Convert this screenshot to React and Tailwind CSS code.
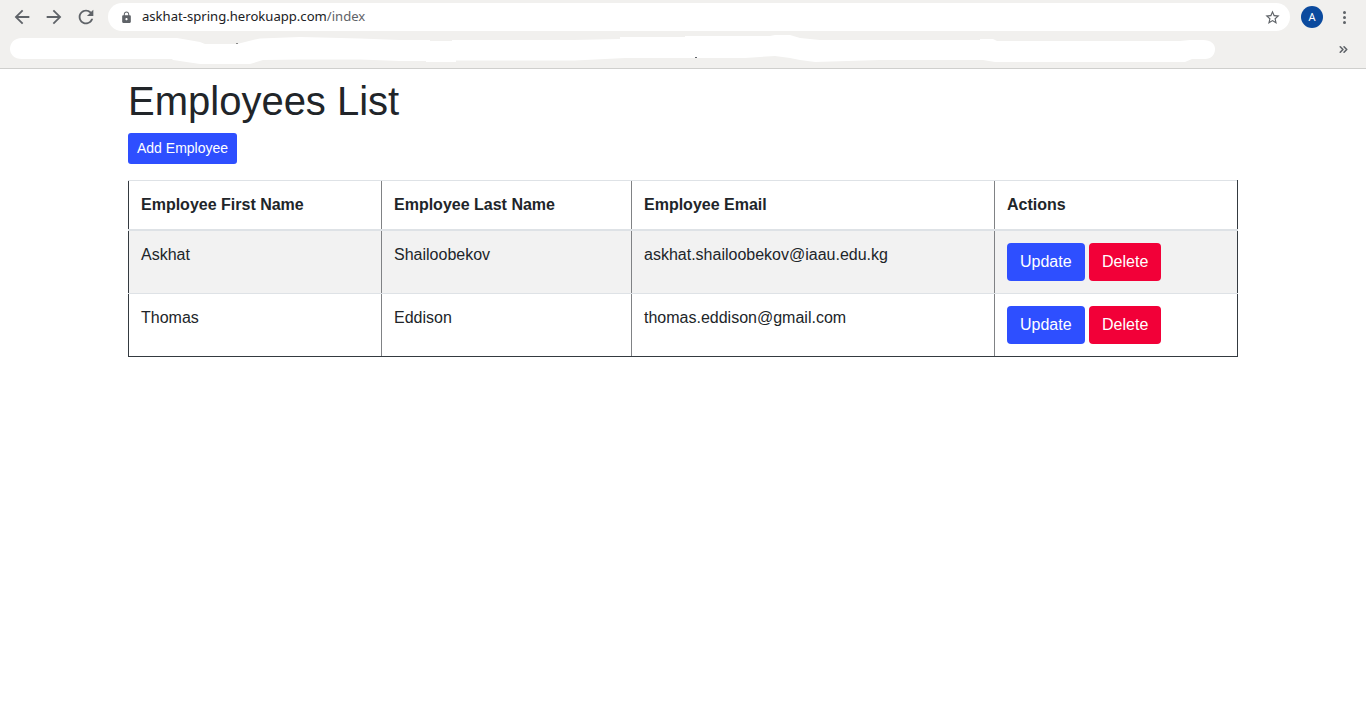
import { MdArrowBack, MdArrowForward, MdRefresh, MdLock, MdStarBorder } from "react-icons/md";
import { ChevronsRight } from "lucide-react";

const EMPLOYEES = [
  { first: "Askhat", last: "Shailoobekov", email: "askhat.shailoobekov@iaau.edu.kg" },
  { first: "Thomas", last: "Eddison", email: "thomas.eddison@gmail.com" },
];

function BrowserBar() {
  return (
    <header className="h-[69px] border-b border-[#cfcfcd] bg-[#f1f0ee]">
      <div className="flex h-[34px] items-start">
        <div className="flex w-[108px] items-center gap-[10px] pl-[11px] pt-[6px] text-[#5f6368]">
          <MdArrowBack size={22} />
          <MdArrowForward size={22} />
          <MdRefresh size={22} />
        </div>
        <div className="mt-[3px] flex h-[28px] w-[1182px] items-center rounded-full bg-white pl-[12px] pr-[9px]">
          <MdLock size={13} className="text-[#5f6368]" />
          <span className="ml-[9px] flex-1 font-['Noto_Sans',sans-serif] text-[13.1px] text-[#202124]">
            askhat-spring.herokuapp.com<span className="text-[#5f6368]">/index</span>
          </span>
          <MdStarBorder size={17} className="text-[#5f6368]" />
        </div>
        <div className="ml-[11px] mt-[6px] flex h-[22px] w-[22px] items-center justify-center rounded-full bg-[#0b4a9e] font-['Noto_Sans',sans-serif] text-[11px] text-white">
          A
        </div>
        <div className="ml-[20px] mt-[11px] flex flex-col gap-[2px]">
          <span className="h-[3px] w-[3px] rounded-full bg-[#5f6368]" />
          <span className="h-[3px] w-[3px] rounded-full bg-[#5f6368]" />
          <span className="h-[3px] w-[3px] rounded-full bg-[#5f6368]" />
        </div>
      </div>
      <div className="flex h-[34px] items-start">
        {/* scribbled-out bookmarks, viewBox keeps page coordinates */}
        <svg width="1220" height="34" viewBox="0 34 1220 34" className="shrink-0">
          <path
            d="M22 38 H177 L200 42 L205 44 H237 L253 40 L260 38.5 L300 37 L360 38.5 L400 40 H430 V41 H452 V40 H573 L620 39 V37 H685 V36 H770 L775 35 H790 L800 38 L820 40 H980 V39 H993 L997 41 H1180 L1190 40 H1203 C1211 40 1215 44 1215 49 C1215 55 1211 59 1205 59 H1192 L1185 62 H995 L983 60 H880 L815 62 L800 60 L790 58 L775 56 L745 58 H690 L625 58 L575 60.5 H456 V62 H426 V61 H400 L360 59.5 H300 L263 60 L250 64 H200 L173 60 L172 59 H22 C14 59 10 54 10 49 C10 43 14 38 22 38 Z"
            fill="#ffffff"
          />
          <rect x="236" y="43" width="2" height="1" fill="#8a8a8a" />
          <rect x="695" y="57" width="2" height="1" fill="#5f6368" />
        </svg>
        <ChevronsRight size={13} strokeWidth={3} className="ml-[117px] mt-[9px] text-[#5f6368]" />
      </div>
    </header>
  );
}

function ActionButton({ color, children }) {
  return (
    <button type="button" className={`h-[38px] rounded-[4px] px-[13px] text-[16px] leading-6 text-white ${color}`}>
      {children}
    </button>
  );
}

export default function App() {
  return (
    <div className="min-h-screen bg-white font-['Liberation_Sans',Arial,sans-serif] text-[16px] text-[#212529]">
      <BrowserBar />
      <main className="mx-auto w-[1110px]">
        <h1 className="mb-[8px] mt-[8px] text-[40px] font-medium leading-[48px]">Employees List</h1>
        <button type="button" className="h-[31px] rounded-[3px] bg-[#2e4fff] px-[9px] text-[14px] text-white">
          Add Employee
        </button>
        <table className="mt-[16px] w-[1110px] table-fixed border-collapse">
          <colgroup>
            <col className="w-[253px]" />
            <col className="w-[250px]" />
            <col className="w-[363px]" />
            <col />
          </colgroup>
          <thead>
            <tr className="h-[49px]">
              {["Employee First Name", "Employee Last Name", "Employee Email", "Actions"].map((h, i) => (
                <th
                  key={h}
                  className={`border-t border-t-[#dee2e6] border-b-2 border-b-[#dee2e6] border-l px-[12px] text-left align-middle font-bold ${
                    i === 0 ? "border-l-[#343a40]" : "border-l-[#808285]"
                  } ${i === 3 ? "border-r border-r-[#343a40]" : ""}`}
                >
                  {h}
                </th>
              ))}
            </tr>
          </thead>
          <tbody>
            {EMPLOYEES.map((emp, idx) => (
              <tr key={emp.email} className={idx === 0 ? "h-[64px] bg-[#f2f2f2]" : "h-[63px]"}>
                <td className={`border-l border-l-[#343a40] px-[12px] pt-[12px] align-top ${idx === 1 ? "border-b border-b-[#343a40]" : "border-b border-b-[#dee2e6]"}`}>
                  {emp.first}
                </td>
                <td className={`border-l border-l-[#808285] px-[12px] pt-[12px] align-top ${idx === 1 ? "border-b border-b-[#343a40]" : "border-b border-b-[#dee2e6]"}`}>
                  {emp.last}
                </td>
                <td className={`border-l border-l-[#808285] px-[12px] pt-[12px] align-top ${idx === 1 ? "border-b border-b-[#343a40]" : "border-b border-b-[#dee2e6]"}`}>
                  {emp.email}
                </td>
                <td className={`border-x border-l-[#808285] border-r-[#343a40] px-[12px] pt-[12px] align-top ${idx === 1 ? "border-b border-b-[#343a40]" : "border-b border-b-[#dee2e6]"}`}>
                  <div className="flex gap-[4.45px]">
                    <ActionButton color="bg-[#2e4fff]">Update</ActionButton>
                    <ActionButton color="bg-[#f20038]">Delete</ActionButton>
                  </div>
                </td>
              </tr>
            ))}
          </tbody>
        </table>
      </main>
    </div>
  );
}
